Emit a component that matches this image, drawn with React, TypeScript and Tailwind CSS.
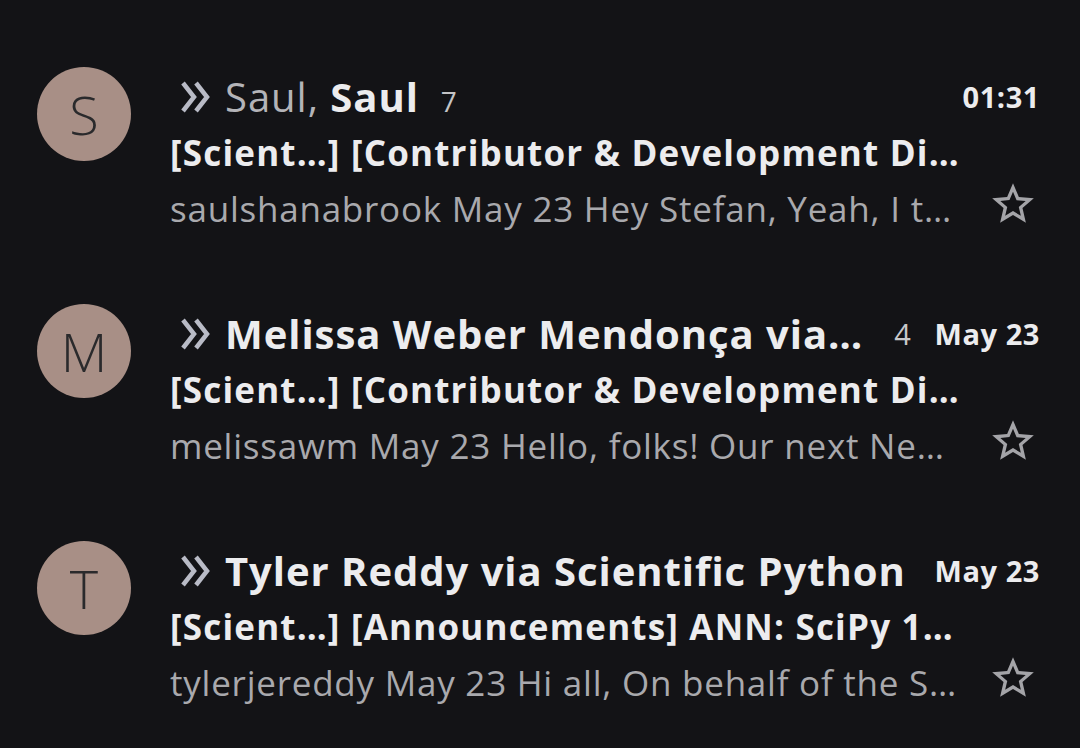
import { ReactNode } from "react";

type Mail = {
  letter: string;
  sender: ReactNode;
  count?: string;
  date: string;
  subject: string;
  preview: string;
};

function Important() {
  return (
    <svg width="32" height="32" viewBox="0 0 32 32" className="shrink-0">
      <path d="M3 2 L14 16 L3 30" fill="none" stroke="#b9bbc6" strokeWidth="4.5" />
      <path d="M16 2 L27 16 L16 30" fill="none" stroke="#b9bbc6" strokeWidth="4.5" />
    </svg>
  );
}

function StarOutline() {
  return (
    <svg width="50" height="50" viewBox="0 0 24 24" className="shrink-0 mr-[2px] -mt-[11px]">
      <path
        fill="#a4a4a8"
        d="M22 9.24l-7.19-.62L12 2 9.19 8.63 2 9.24l5.46 4.73L5.82 21 12 17.27 18.18 21l-1.63-7.03L22 9.24zM12 15.4l-3.76 2.27 1-4.28-3.32-2.88 4.38-.38L12 6.1l1.71 4.04 4.38.38-3.32 2.88 1 4.28L12 15.4z"
      />
    </svg>
  );
}

const mails: Mail[] = [
  {
    letter: "S",
    sender: (
      <>
        <span className="text-[#b4b4b8] font-normal">Saul, </span>
        <span className="font-bold text-[#ececee]">Saul</span>
        <span className="ml-[22px] text-[28px] font-normal text-[#c4c4c6]">7</span>
      </>
    ),
    date: "01:31",
    subject: "[Scient…] [Contributor & Development Di…",
    preview: "saulshanabrook May 23 Hey Stefan, Yeah, I t…",
  },
  {
    letter: "M",
    sender: <span className="font-bold text-[#ececee]">Melissa Weber Mendonça via…</span>,
    count: "4",
    date: "May 23",
    subject: "[Scient…] [Contributor & Development Di…",
    preview: "melissawm May 23 Hello, folks! Our next Ne…",
  },
  {
    letter: "T",
    sender: <span className="font-bold text-[#ececee]">Tyler Reddy via Scientific Python</span>,
    date: "May 23",
    subject: "[Scient…] [Announcements] ANN: SciPy 1…",
    preview: "tylerjereddy May 23 Hi all, On behalf of the S…",
  },
];

function MailRow({ mail }: { mail: Mail }) {
  return (
    <div className="flex h-[237px] pl-[37px]">
      <div className="w-[94px] h-[94px] rounded-full bg-[#a88f86] flex items-center justify-center shrink-0">
        <span className="text-[54px] font-light text-[#2a2a2c] leading-none">{mail.letter}</span>
      </div>
      <div className="flex-1 ml-[39px] pr-[40px] mt-[1px] min-w-0">
        <div className="flex items-center justify-between h-[57px]">
          <div className="flex items-center whitespace-nowrap">
            <span className="ml-[10px] mr-[13px] flex items-center">
              <Important />
            </span>
            <span className="text-[40px] tracking-[0.024em]">{mail.sender}</span>
          </div>
          <div className="flex items-center whitespace-nowrap text-[29px] tracking-[0.02em]">
            {mail.count && <span className="mr-[23px] font-medium text-[#c8c8ca]">{mail.count}</span>}
            <span className="font-bold text-[#ececee]">{mail.date}</span>
          </div>
        </div>
        <div className="h-[56px] leading-[56px] text-[35px] tracking-[0.034em] font-bold text-[#ececee] whitespace-nowrap">
          {mail.subject}
        </div>
        <div className="flex items-center justify-between h-[56px]">
          <span className="leading-[56px] text-[35px] tracking-[0.022em] text-[#a9a9ad] whitespace-nowrap">
            {mail.preview}
          </span>
          <StarOutline />
        </div>
      </div>
    </div>
  );
}

export default function App() {
  return (
    <div
      className="w-[1080px] h-[748px] bg-[#131316] overflow-hidden pt-[67px]"
      style={{ fontFamily: "'Open Sans', 'Liberation Sans', sans-serif" }}
    >
      {mails.map((m) => (
        <MailRow key={m.letter} mail={m} />
      ))}
    </div>
  );
}
